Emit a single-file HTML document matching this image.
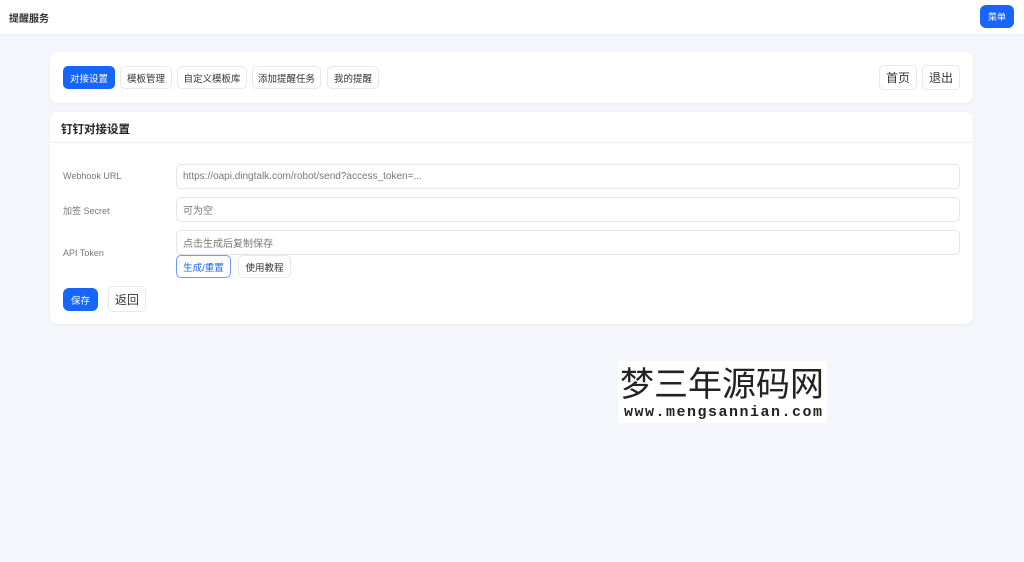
<!DOCTYPE html>
<html><head><meta charset="utf-8"><style>
*{box-sizing:border-box;margin:0;padding:0}
body{width:1024px;height:562px;background:#f4f6fb;font-family:"Liberation Sans","Noto Sans CJK SC",sans-serif;position:relative;overflow:hidden;color:#222}
.abs{position:absolute}
.hdr{left:0;top:0;width:1024px;height:34px;background:#fff;box-shadow:0 1px 3px rgba(0,0,0,.04)}
.card{background:#fff;border-radius:8px;box-shadow:0 1px 4px rgba(0,0,0,.05)}
.btn{position:absolute;border:1px solid #e6e8ec;border-radius:5px;background:#fff;font-size:9.5px;color:#333;display:flex;align-items:center;justify-content:center}
.pri{background:#1764ff;border-color:#1764ff;color:#fff}
.lbl{position:absolute;left:63px;font-size:9px;color:#777}
.inp{position:absolute;left:176px;width:784px;height:25px;border:1px solid #e3e5e9;border-radius:5px;font-size:10px;color:#777;padding-left:6px;display:flex;align-items:center}
</style></head><body>
<div class="abs hdr"></div>
<div class="abs" style="left:9px;top:10px;font-size:10px;font-weight:bold;color:#333">提醒服务</div>
<div class="btn pri" style="left:980px;top:5px;width:34px;height:23px;border-radius:6px;font-size:9px">菜单</div>

<div class="abs card" style="left:50px;top:52px;width:923px;height:51px"></div>
<div class="btn pri" style="left:63px;top:66px;width:52px;height:23px">对接设置</div>
<div class="btn" style="left:120px;top:66px;width:52px;height:23px">模板管理</div>
<div class="btn" style="left:177px;top:66px;width:70px;height:23px">自定义模板库</div>
<div class="btn" style="left:252px;top:66px;width:69px;height:23px">添加提醒任务</div>
<div class="btn" style="left:327px;top:66px;width:52px;height:23px">我的提醒</div>
<div class="btn" style="left:879px;top:65px;width:38px;height:25px;font-size:12px">首页</div>
<div class="btn" style="left:922px;top:65px;width:38px;height:25px;font-size:12px">退出</div>

<div class="abs card" style="left:50px;top:112px;width:923px;height:212px"></div>
<div class="abs" style="left:50px;top:142px;width:923px;height:1px;background:#eceef2"></div>
<div class="abs" style="left:61px;top:121px;font-size:11.5px;font-weight:bold;color:#222">钉钉对接设置</div>

<div class="lbl" style="top:171px">Webhook URL</div>
<div class="inp" style="top:164px">https://oapi.dingtalk.com/robot/send?access_token=...</div>
<div class="lbl" style="top:204px">加签 Secret</div>
<div class="inp" style="top:197px">可为空</div>
<div class="lbl" style="top:248px">API Token</div>
<div class="inp" style="top:230px">点击生成后复制保存</div>
<div class="btn" style="left:176px;top:255px;width:55px;height:23px;border-color:#6a9cff;color:#1764ff">生成/重置</div>
<div class="btn" style="left:238px;top:255px;width:53px;height:23px">使用教程</div>
<div class="btn pri" style="left:63px;top:288px;width:35px;height:23px;border-radius:6px">保存</div>
<div class="btn" style="left:108px;top:286px;width:38px;height:26px;font-size:12px">返回</div>

<div class="abs" style="left:618px;top:361px;width:209px;height:62px;background:#fff"></div>
<div class="abs" style="left:620px;top:362px;font-size:34px;color:#222;font-family:'Noto Sans CJK SC',sans-serif;letter-spacing:0;line-height:40px;white-space:nowrap">梦三年源码网</div>
<div class="abs" style="left:624px;top:404px;font-size:15px;line-height:17px;font-family:'Liberation Mono',monospace;color:#222;font-weight:bold;letter-spacing:1.5px;white-space:nowrap">www.mengsannian.com</div>
</body></html>
